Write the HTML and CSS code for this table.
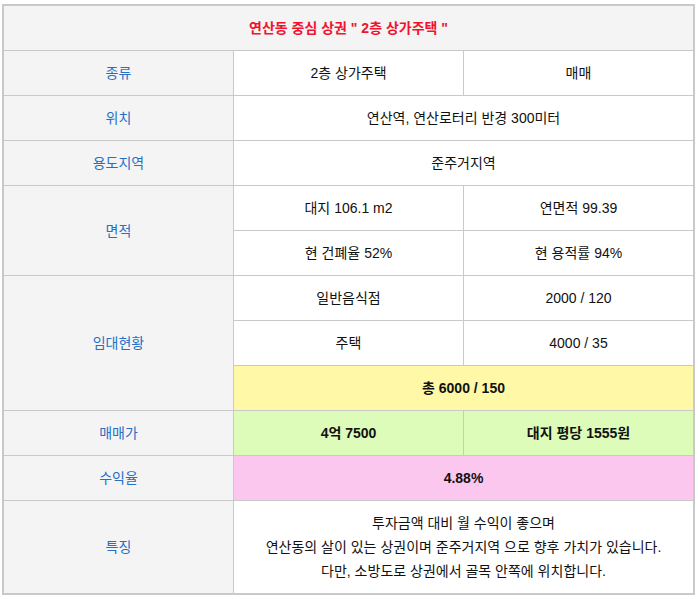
FILE: index.html
```html
<!DOCTYPE html>
<html lang="ko">
<head>
<meta charset="utf-8">
<title>연산동 중심 상권 2층 상가주택</title>
<link rel="stylesheet" href="styles.css">
</head>
<body>
<div class="sheet">
  <div class="cell title span3">연산동 중심 상권 " 2층 상가주택 "</div>

  <div class="cell label">종류</div>
  <div class="cell">2층 상가주택</div>
  <div class="cell">매매</div>

  <div class="cell label">위치</div>
  <div class="cell span2">연산역, 연산로터리 반경 300미터</div>

  <div class="cell label">용도지역</div>
  <div class="cell span2">준주거지역</div>

  <div class="cell label rows2">면적</div>
  <div class="cell">대지 106.1 m2</div>
  <div class="cell">연면적 99.39</div>
  <div class="cell">현 건폐율 52%</div>
  <div class="cell">현 용적률 94%</div>

  <div class="cell label rows3">임대현황</div>
  <div class="cell">일반음식점</div>
  <div class="cell">2000 / 120</div>
  <div class="cell">주택</div>
  <div class="cell">4000 / 35</div>
  <div class="cell span2 strong yellow">총 6000 / 150</div>

  <div class="cell label">매매가</div>
  <div class="cell strong green">4억 7500</div>
  <div class="cell strong green">대지 평당 1555원</div>

  <div class="cell label">수익율</div>
  <div class="cell span2 strong pink">4.88%</div>

  <div class="cell label">특징</div>
  <div class="cell span2 multi">
    <span>투자금액 대비 월 수익이 좋으며</span>
    <span>연산동의 살이 있는 상권이며 준주거지역 으로 향후 가치가 있습니다.</span>
    <span>다만, 소방도로 상권에서 골목 안쪽에 위치합니다.</span>
  </div>
</div>
</body>
</html>
```

FILE: styles.css
```css
html, body {
  margin: 0;
  padding: 0;
  background: #ffffff;
}

body {
  padding: 4px 3px 4px 2px;
  font-family: "Liberation Sans", "Noto Sans CJK KR", sans-serif;
  font-size: 14px;
  color: #111111;
}

.sheet {
  display: grid;
  grid-template-columns: repeat(3, 229px);
  gap: 1px;
  width: max-content;
  background: #c9c9c9;
  border: 2px solid #c9c9c9;
}

.cell {
  display: flex;
  flex-direction: column;
  align-items: center;
  justify-content: center;
  padding: 10px 0;
  line-height: 24px;
  min-height: 24px;
  text-align: center;
  background: #ffffff;
}

.span2 { grid-column: span 2; }
.span3 { grid-column: span 3; }
.rows2 { grid-row: span 2; }
.rows3 { grid-row: span 3; }

.title {
  background: #f4f4f4;
  color: #f0132d;
  font-weight: bold;
}

.label {
  background: #f4f4f4;
  color: #2470c8;
}

.strong { font-weight: bold; }
.yellow { background: #fff8a6; }
.green { background: #ddfcb9; }
.pink { background: #fbc7ef; }

.multi span { display: block; }
```
